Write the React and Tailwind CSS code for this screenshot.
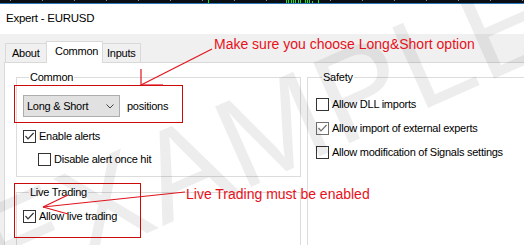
import React from 'react';

const ticks = [10, 42, 74, 106, 138, 170, 202, 234, 266, 298, 330, 362, 394, 426, 458, 490, 522];
const bars = [
    { x: 208, h: 3 }, { x: 286, h: 3 }, { x: 288, h: 3 }, { x: 291, h: 3 }, { x: 293, h: 3 },
    { x: 295, h: 3 }, { x: 298, h: 3 }, { x: 300, h: 3 }, { x: 305, h: 3 }, { x: 307, h: 3 },
    { x: 309, h: 3 }, { x: 312, h: 2 }, { x: 318, h: 3 },
];

const Check = ({ checked, muted }) => (
    <span className={`w-[13px] h-[13px] shrink-0 border bg-white flex items-center justify-center ${muted ? 'border-[#707070]' : 'border-[#333333]'}`}>
        {checked && (
            <svg width="11" height="11" viewBox="0 0 11 11">
                <path d="M1.5 5 L4 7.8 L9.6 2" fill="none" stroke={muted ? '#707070' : '#333333'} strokeWidth="1.2" />
            </svg>
        )}
    </span>
);

const CheckRow = ({ label, checked, muted, className = '' }) => (
    <div className={`flex items-center gap-[3px] h-[13px] leading-[13px] ${className}`}>
        <Check checked={checked} muted={muted} />
        <span className="whitespace-nowrap">{label}</span>
    </div>
);

const Group = ({ title, className = '', children }) => (
    <fieldset className={`border border-[#dcdcdc] ${className}`}>
        <legend className="ml-[6px] px-[1px] leading-[14px] whitespace-nowrap">{title}</legend>
        {children}
    </fieldset>
);

const App = () => {
    return (
        <div className="relative w-[524px] h-[245px] overflow-hidden bg-[#f0f0f0] text-[11px] tracking-[-0.25px] text-black font-['Liberation_Sans',Arial,sans-serif]">
            {/* chart strip behind the window */}
            <div className="relative h-[4px] bg-[#0b0f13] border-b border-[#2d78b8]">
                <svg className="absolute inset-0" width="524" height="3">
                    {ticks.map(x => <rect key={x} x={x} y="0" width="1" height="1" fill="#8a8a8a" />)}
                    {bars.map(b => <rect key={b.x} x={b.x} y={3 - b.h} width="1" height={b.h} fill="#1ee61e" />)}
                </svg>
            </div>

            {/* title bar */}
            <div className="h-[30px] bg-white flex items-center pl-[6px] text-[11.5px]">Expert - EURUSD</div>

            <div className="pl-[4px] pt-[7px]">
                {/* tabs */}
                <div className="flex items-end h-[21px] pl-[1px]">
                    <div className="w-[41px] h-[19px] border-l border-t border-[#d9d9d9] pl-[6px] leading-[19px]">About</div>
                    <div className="relative w-[57px] h-[22px] -mb-[1px] border-l border-t border-r border-[#d9d9d9] bg-white pl-[8px] leading-[19px] z-10">Common</div>
                    <div className="w-[38px] h-[19px] border-t border-r border-[#d9d9d9] pl-[4px] leading-[19px]">Inputs</div>
                </div>

                {/* panel */}
                <div className="h-[200px] bg-white border-l border-t border-[#d9d9d9] pl-[11px] flex gap-[6px]">
                    <div className="w-[285px] shrink-0 flex flex-col">
                        <Group title="Common" className="mt-[7px] pl-[6px] pb-[10px]">
                            <div className="flex items-center gap-[7px] mt-[11px]">
                                <div className="w-[97px] h-[22px] bg-[#e1e1e1] border border-[#adadad] flex items-center justify-between pl-[3px] pr-[5px]">
                                    <span className="whitespace-nowrap">Long &amp; Short</span>
                                    <svg width="8" height="5" viewBox="0 0 8 5">
                                        <path d="M0.5 0.5 L4 4 L7.5 0.5" fill="none" stroke="#444" strokeWidth="1" />
                                    </svg>
                                </div>
                                <span>positions</span>
                            </div>
                            <CheckRow label="Enable alerts" checked className="mt-[13px]" />
                            <CheckRow label="Disable alert once hit" className="mt-[10px] ml-[15px]" />
                        </Group>
                        <Group title="Live Trading" className="mt-[8px] pl-[6px] pb-[40px]">
                            <CheckRow label="Allow live trading" checked className="mt-[11px]" />
                        </Group>
                    </div>
                    <div className="w-[260px] shrink-0">
                        <Group title="Safety" className="mt-[7px] pl-[8px] pb-[120px]">
                            <CheckRow label="Allow DLL imports" className="mt-[14px]" />
                            <CheckRow label="Allow import of external experts" checked muted className="mt-[11px]" />
                            <CheckRow label="Allow modification of Signals settings" className="mt-[11px]" />
                        </Group>
                    </div>
                </div>
            </div>

            {/* EXAMPLE watermark */}
            <div className="pointer-events-none absolute left-[266px] top-[132px] -translate-x-1/2 -translate-y-1/2 -rotate-[24deg] text-[128px] leading-none tracking-[1px] text-black/[0.07] whitespace-nowrap">
                EXAMPLE
            </div>

            {/* annotations */}
            <div className="pointer-events-none absolute left-[14px] top-[85px] w-[169px] h-[38px] border-[1.5px] border-[#cc0a0a]" />
            <div className="pointer-events-none absolute left-[14px] top-[183px] w-[127px] h-[55px] border-[1.5px] border-[#cc0a0a]" />
            <div className="absolute left-[214px] top-[36px] text-[14px] leading-[16px] tracking-normal text-[#e8111b] whitespace-nowrap">
                Make sure you choose Long&amp;Short option
            </div>
            <div className="absolute left-[186px] top-[186px] text-[14px] leading-[16px] tracking-normal text-[#e8111b] whitespace-nowrap">
                Live Trading must be enabled
            </div>
            <svg className="pointer-events-none absolute inset-0" width="524" height="245">
                <g stroke="#e0141e" strokeWidth="1.2" fill="none">
                    <line x1="212" y1="49" x2="141" y2="85" />
                    <line x1="141" y1="85" x2="141" y2="69" />
                    <line x1="141" y1="85" x2="163" y2="85" />
                    <line x1="185" y1="192" x2="43" y2="207" />
                    <line x1="43" y1="207" x2="68" y2="195" />
                    <line x1="43" y1="207" x2="68" y2="214" />
                </g>
            </svg>
        </div>
    );
};

export default App;
